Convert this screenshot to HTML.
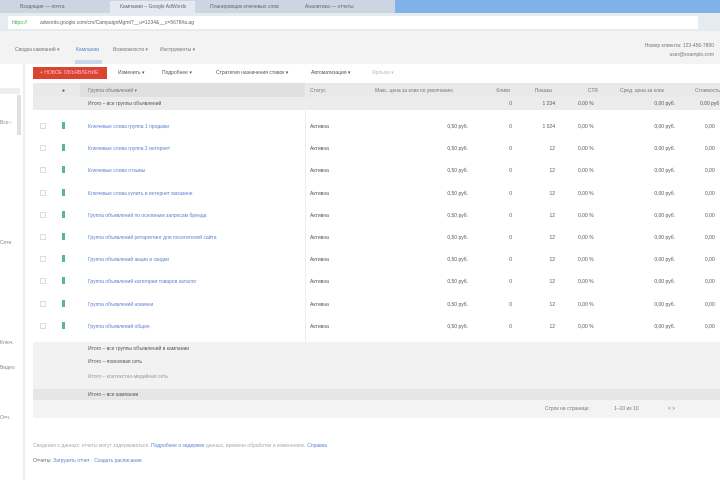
<!DOCTYPE html><html><head><meta charset="utf-8"><style>
*{margin:0;padding:0;box-sizing:border-box}
body{width:720px;height:480px;overflow:hidden;background:#fff;font-family:"Liberation Sans",sans-serif;font-size:5px;color:#777;position:relative}
.a{position:absolute;white-space:nowrap}
.l{color:#5f80d0}
.b{color:#555}
.r{text-align:right}
</style></head><body>
<div class="a" style="left:0;top:0;width:720px;height:13px;background:#ccd6e2"></div>
<div class="a" style="left:395px;top:0;width:325px;height:13px;background:#7fb2e6"></div>
<div class="a" style="left:110px;top:1px;width:85px;height:12px;background:#e4eaf1"></div>
<div class="a" style="left:20px;top:4px;color:#666">Входящие — почта</div>
<div class="a" style="left:120px;top:4px;color:#666">Кампании – Google AdWords</div>
<div class="a" style="left:210px;top:4px;color:#666">Планировщик ключевых слов</div>
<div class="a" style="left:305px;top:4px;color:#666">Аналитика — отчеты</div>
<div class="a" style="left:0;top:13px;width:720px;height:18px;background:#e6ebf0"></div>
<div class="a" style="left:8px;top:16px;width:690px;height:13px;background:#fff"></div>
<div class="a" style="left:12px;top:20px;color:#4a4">https://</div>
<div class="a" style="left:40px;top:20px;color:#666">adwords.google.com/cm/CampaignMgmt?__u=1234&amp;__c=5678#a.ag</div>
<div class="a" style="left:0;top:31px;width:720px;height:33px;background:#f3f3f3"></div>
<div class="a" style="left:15px;top:47px">Сводка кампаний ▾</div>
<div class="a l" style="left:76px;top:47px">Кампании</div>
<div class="a" style="left:75px;top:60px;width:27px;height:4px;background:#c8d6ee"></div>
<div class="a" style="left:113px;top:47px">Возможности ▾</div>
<div class="a" style="left:160px;top:47px">Инструменты ▾</div>
<div class="a r" style="right:6px;top:43px">Номер клиента: 123-456-7890</div>
<div class="a r" style="right:6px;top:52px">user@example.com</div>
<div class="a" style="left:0;top:64px;width:25px;height:416px;background:#fff;border-right:2px solid #eee"></div>
<div class="a" style="left:0;top:88px;width:20px;height:6px;background:#eee"></div>
<div class="a" style="left:17px;top:95px;width:4px;height:40px;background:#e0e0e0"></div>
<div class="a" style="left:0;top:120px;color:#888">Все ›</div>
<div class="a" style="left:0;top:240px;color:#888">Сети</div>
<div class="a" style="left:0;top:340px;color:#888">Ключ.</div>
<div class="a" style="left:0;top:365px;color:#888">Видео</div>
<div class="a" style="left:0;top:415px;color:#888">Отч.</div>
<div class="a" style="left:33px;top:67px;width:74px;height:12px;background:#d9452f"></div>
<div class="a" style="left:40px;top:70px;color:#fbd">+ НОВОЕ ОБЪЯВЛЕНИЕ</div>
<div class="a" style="left:118px;top:70px;color:#555">Изменить ▾</div>
<div class="a" style="left:162px;top:70px;color:#555">Подробнее ▾</div>
<div class="a" style="left:216px;top:70px;color:#555">Стратегия назначения ставок ▾</div>
<div class="a" style="left:311px;top:70px;color:#555">Автоматизация ▾</div>
<div class="a" style="left:372px;top:70px;color:#bbb">Ярлыки ▾</div>
<div class="a" style="left:33px;top:83px;width:687px;height:14px;background:#e9e9e9"></div>
<div class="a" style="left:33px;top:97px;width:687px;height:13px;background:#ececec"></div>
<div class="a" style="left:80px;top:83px;width:225px;height:14px;background:#e0e0e0"></div>
<div class="a b" style="left:62px;top:88px">●</div>
<div class="a" style="left:88px;top:88px">Группа объявлений ▾</div>
<div class="a" style="left:88px;top:101px;color:#555">Итого – все группы объявлений</div>
<div class="a" style="left:310px;top:88px">Статус</div>
<div class="a" style="left:375px;top:88px">Макс. цена за клик по умолчанию</div>
<div class="a r" style="left:480px;top:88px;width:30px">Клики</div>
<div class="a r" style="left:522px;top:88px;width:30px">Показы</div>
<div class="a r" style="left:568px;top:88px;width:30px">CTR</div>
<div class="a" style="left:620px;top:88px">Сред. цена за клик</div>
<div class="a" style="left:695px;top:88px">Стоимость</div>
<div id="rows"></div>
<div class="a" style="left:33px;top:342px;width:687px;height:47px;background:#f2f2f2"></div>
<div class="a" style="left:33px;top:389px;width:687px;height:11px;background:#e6e6e6"></div>
<div class="a" style="left:33px;top:400px;width:687px;height:18px;background:#f3f3f3"></div>
<div class="a" style="left:88px;top:346px;color:#555">Итого – все группы объявлений в кампании</div>
<div class="a" style="left:88px;top:359px;color:#555">Итого – поисковая сеть</div>
<div class="a" style="left:88px;top:374px;color:#999">Итого – контекстно-медийная сеть</div>
<div class="a" style="left:88px;top:392px;color:#555">Итого – все кампании</div>
<div class="a" style="left:545px;top:406px">Строк на странице:</div>
<div class="a" style="left:614px;top:406px">1–10 из 10</div>
<div class="a" style="left:668px;top:406px">&lt; &gt;</div>
<div class="a" style="left:33px;top:443px;color:#aaa">Сведения о данных: отчеты могут задерживаться. <span class="l">Подробнее о задержке</span> данных, времени обработки и изменениях. <span class="l">Справка</span></div>
<div class="a" style="left:33px;top:458px;color:#666">Отчеты: <span class="l">Загрузить отчет · Создать расписание</span></div>
<script>
var names=["Ключевые слова группа 1 продажи","Ключевые слова группа 2 интернет","Ключевые слова отзывы","Ключевые слова купить в интернет магазине","Группа объявлений по основным запросам бренда","Группа объявлений ретаргетинг для посетителей сайта","Группа объявлений акции и скидки","Группа объявлений категории товаров каталог","Группа объявлений новинки","Группа объявлений общее"];
var h="";
for(var i=0;i<10;i++){var y=124+i*22.2;
h+='<div class="a" style="left:40px;top:'+(y-1)+'px;width:6px;height:6px;border:1px solid #ddd"></div>';
h+='<div class="a" style="left:62px;top:'+(y-2)+'px;width:3px;height:7px;background:#5cb88a"></div>';
h+='<div class="a l" style="left:88px;top:'+y+'px">'+names[i]+'</div>';
h+='<div class="a" style="left:310px;top:'+y+'px;color:#555">Активна</div>';
h+='<div class="a r" style="left:430px;top:'+y+'px;width:38px;color:#555">0,50 руб.</div>';
h+='<div class="a r" style="left:490px;top:'+y+'px;width:22px;color:#555">0</div>';
h+='<div class="a r" style="left:530px;top:'+y+'px;width:25px;color:#555">'+(i==0?'1 024':'12')+'</div>';
h+='<div class="a" style="left:578px;top:'+y+'px;color:#555">0,00 %</div>';
h+='<div class="a r" style="left:640px;top:'+y+'px;width:35px;color:#555">0,00 руб.</div>';
h+='<div class="a" style="left:705px;top:'+y+'px;color:#555">0,00</div>';}
var t=[101,346,359,374,392];
for(var j=0;j<5;j++){var y=t[j];
h+='<div class="a r" style="left:490px;top:'+y+'px;width:22px;color:#555">0</div>';
h+='<div class="a r" style="left:525px;top:'+y+'px;width:30px;color:#555">1 234</div>';
h+='<div class="a" style="left:578px;top:'+y+'px;color:#555">0,00 %</div>';
h+='<div class="a r" style="left:635px;top:'+y+'px;width:40px;color:#555">0,00 руб.</div>';
h+='<div class="a" style="left:700px;top:'+y+'px;color:#555">0,00 руб</div>';}
document.getElementById('rows').innerHTML=h;
</script>
<div class="a" style="left:305px;top:83px;width:1px;height:260px;background:#eee"></div>
</body></html>
